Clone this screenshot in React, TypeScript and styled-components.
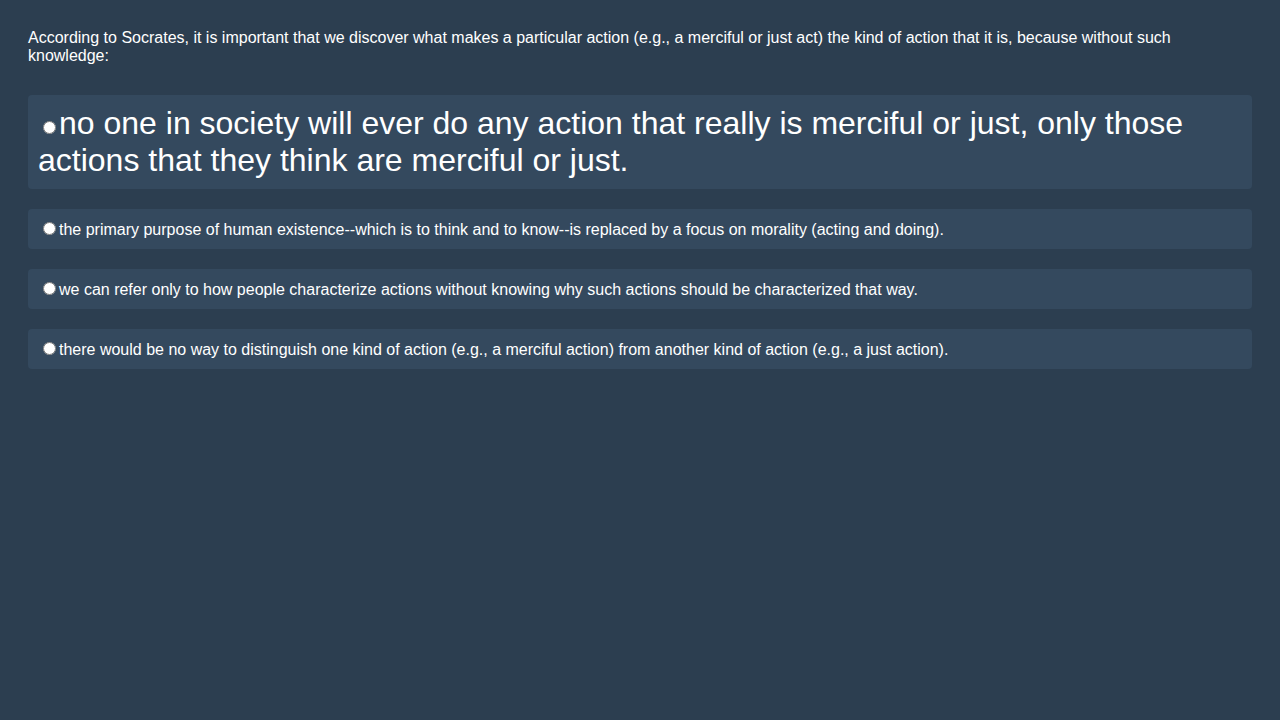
import React from "react";
import styled, { createGlobalStyle } from "styled-components";

const Global = createGlobalStyle`
  html, body { margin: 0; padding: 0; background: #2c3e50; }
  body { font-family: "Liberation Sans", Arial, sans-serif; color: #ffffff; }
`;

const Page = styled.div`
  padding: 29px 28px 28px;
  display: flex;
  flex-direction: column;
`;

const Question = styled.div`
  font-size: 16px;
  line-height: normal;
  margin-bottom: 30px;
`;

const Options = styled.div`
  display: flex;
  flex-direction: column;
  gap: 20px;
`;

const Option = styled.label<{ $big?: boolean }>`
  display: block;
  background: #34495e;
  border-radius: 4px;
  padding: 10px;
  font-size: ${(p) => (p.$big ? "32px" : "16px")};
  line-height: normal;
  color: #ffffff;
`;

const options = [
  "no one in society will ever do any action that really is merciful or just, only those actions that they think are merciful or just.",
  "the primary purpose of human existence--which is to think and to know--is replaced by a focus on morality (acting and doing).",
  "we can refer only to how people characterize actions without knowing why such actions should be characterized that way.",
  "there would be no way to distinguish one kind of action (e.g., a merciful action) from another kind of action (e.g., a just action).",
];

export default function App() {
  return (
    <>
      <Global />
      <Page>
        <Question>
          According to Socrates, it is important that we discover what makes a particular action (e.g., a merciful or just act) the kind of action that it is, because without such knowledge:
        </Question>
        <Options>
          {options.map((o, i) => (
            <Option key={i} $big={i === 0}>
              <input type="radio" name="q" />
              {o}
            </Option>
          ))}
        </Options>
      </Page>
    </>
  );
}
